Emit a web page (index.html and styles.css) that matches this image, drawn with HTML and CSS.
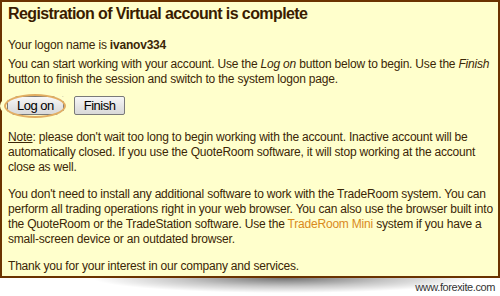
FILE: index.html
```html
<!DOCTYPE html>
<html>
<head>
<meta charset="utf-8">
<link rel="stylesheet" href="styles.css">
</head>
<body>
<div class="page">
  <div class="box">
    <h1 class="title">Registration of Virtual account is complete</h1>
    <p class="login">Your logon name is <b>ivanov334</b></p>
    <p class="intro">You can start working with your account. Use the <i>Log on</i> button below to begin. Use the <i>Finish</i> button to finish the session and switch to the system logon page.</p>
    <div class="actions">
      <span class="hl"><button class="btn">Log on</button></span>
      <button class="btn">Finish</button>
    </div>
    <p class="para note"><u>Note</u>: please don't wait too long to begin working with the account. Inactive account will be automatically closed. If you use the QuoteRoom software, it will stop working at the account close as well.</p>
    <p class="para">You don't need to install any additional software to work with the TradeRoom system. You can perform all trading operations right in your web browser. You can also use the browser built into the QuoteRoom or the TradeStation software. Use the <a class="link">TradeRoom Mini</a> system if you have a small-screen device or an outdated browser.</p>
    <p class="para">Thank you for your interest in our company and services.</p>
  </div>
  <div class="footer">
    <div class="shadow"></div>
    <span class="site">www.forexite.com</span>
  </div>
</div>
</body>
</html>
```

FILE: styles.css
```css
html, body {
  margin: 0;
  padding: 0;
  background: #ffffff;
}
.page {
  width: 500px;
  height: 296px;
  font-family: "Liberation Sans", Arial, sans-serif;
}
.box {
  box-sizing: border-box;
  width: 500px;
  height: 278px;
  border: 2px solid #6b3300;
  background: #ffffcc;
  padding: 3px 4px 0 6px;
  color: #3b2606;
  font-size: 12px;
  line-height: 15px;
  letter-spacing: -0.2px;
  position: relative;
  z-index: 1;
}
.title {
  margin: 0;
  font-size: 16px;
  line-height: 18px;
  font-weight: bold;
  letter-spacing: -0.6px;
  color: #3a1c00;
}
.login {
  margin: 15px 0 0;
}
.intro {
  margin: 4px 0 0;
}
.actions {
  display: flex;
  gap: 10px;
  margin: 9px 0 0 -1px;
}
.hl {
  position: relative;
  display: inline-flex;
}
.hl::after {
  content: "";
  position: absolute;
  left: -3px;
  right: -2px;
  top: -2px;
  bottom: -3px;
  border: 2px solid #e2ae62;
  border-radius: 50%;
  box-shadow: 0 0 0 4px #ffffcc;
  pointer-events: none;
}
.btn {
  box-sizing: border-box;
  height: 19px;
  padding: 0 9px;
  margin: 0;
  font-family: "Liberation Sans", Arial, sans-serif;
  font-size: 13px;
  line-height: 17px;
  letter-spacing: -0.5px;
  color: #000000;
  border: 1px solid #7a7a7a;
  border-radius: 2px;
  background: linear-gradient(#f7f7f7, #e4e4e4 60%, #d9d9d9);
}
.para {
  margin: 12px 0 0;
}
.note {
  margin-top: 15px;
}
.link {
  color: #d98a1c;
  text-decoration: none;
}
.footer {
  position: relative;
  height: 18px;
  display: flex;
  justify-content: flex-end;
  align-items: center;
  padding-right: 5px;
}
.shadow {
  position: absolute;
  left: 85px;
  top: 0;
  width: 385px;
  height: 15px;
  background: radial-gradient(ellipse 50% 100% at 52% 0, rgba(0,0,0,0.55), rgba(0,0,0,0.22) 55%, rgba(0,0,0,0) 100%);
}
.site {
  position: relative;
  font-size: 11px;
  line-height: 14px;
  letter-spacing: -0.4px;
  color: #333333;
}
```
